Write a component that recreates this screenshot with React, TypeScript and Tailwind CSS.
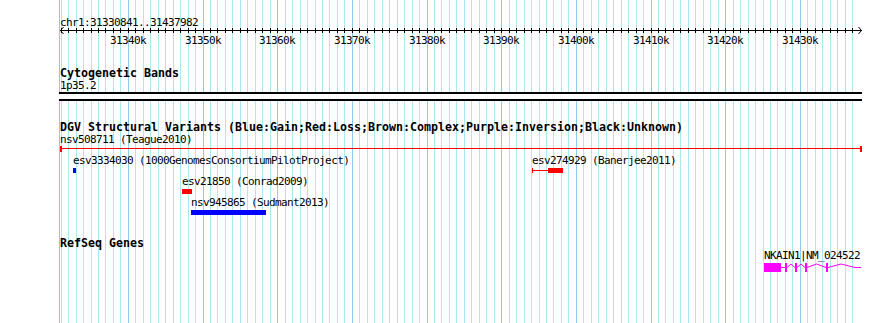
import type { ReactNode } from "react";

const START = 31330841;
const END = 31437982;
const SCALE = 800 / (END - START);

// pixel column of a genomic position
function col(pos: number): number {
  return Math.floor(60 + (pos - START) * SCALE);
}

const KB: number[] = [];
for (let k = 31331; k <= 31437; k++) KB.push(k);

const MONO = "font-['DejaVu_Sans_Mono','Liberation_Mono',monospace]";
const TEXT = `${MONO} whitespace-nowrap text-[11px] leading-[13px] tracking-[-0.62px] text-black`;
const TITLE = `${MONO} whitespace-nowrap text-[11.63px] leading-[12px] font-bold text-black`;

type DgvFeature = {
  id: string;
  study: string;
  row: number;
  labelX: number;
  kind: "span" | "box" | "capped";
  color: string;
  x1: number;
  x2: number;
  boxFrom?: number;
};

const DGV: DgvFeature[] = [
  { id: "nsv508711", study: "Teague2010", row: 0, labelX: 60, kind: "span", color: "#ff0000", x1: 60, x2: 862 },
  { id: "esv3334030", study: "1000GenomesConsortiumPilotProject", row: 1, labelX: 73, kind: "box", color: "#0000ff", x1: 73, x2: 76 },
  { id: "esv274929", study: "Banerjee2011", row: 1, labelX: 532, kind: "capped", color: "#ff0000", x1: 532, x2: 563, boxFrom: 548 },
  { id: "esv21850", study: "Conrad2009", row: 2, labelX: 182, kind: "box", color: "#ff0000", x1: 182, x2: 192 },
  { id: "nsv945865", study: "Sudmant2013", row: 3, labelX: 191, kind: "box", color: "#0000ff", x1: 191, x2: 266 },
];

const ROW_H = 21;

function Grid() {
  return (
    <svg className="absolute inset-0" width={890} height={323} shapeRendering="crispEdges">
      <line x1={59.5} x2={59.5} y1={0} y2={323} stroke="#8ccbe9" />
      {KB.map((k) => {
        const x = col(k * 1000) + 0.5;
        const major = k % 10 === 0;
        return (
          <line key={k} x1={x} x2={x} y1={0} y2={323} stroke={major ? "#8ccbe9" : "#ade8ee"} />
        );
      })}
    </svg>
  );
}

function Ruler() {
  return (
    <div className="relative h-[18px] w-[802px]">
      <svg
        className="absolute left-0 top-0 overflow-visible"
        width={802}
        height={18}
        viewBox="60 29 802 18"
        shapeRendering="crispEdges"
      >
        <line x1={60} x2={862} y1={30.5} y2={30.5} stroke="#000" />
        <polyline points="63.5,27 60.5,30.5 63.5,34" fill="none" stroke="#000" shapeRendering="auto" />
        <polyline points="858.5,27 861.5,30.5 858.5,34" fill="none" stroke="#000" shapeRendering="auto" />
        {KB.map((k) => {
          const x = col(k * 1000) + 0.5;
          return <line key={k} x1={x} x2={x} y1={28} y2={33} stroke="#000" />;
        })}
      </svg>
      {KB.filter((k) => k % 10 === 0).map((k) => (
        <span
          key={k}
          className={`absolute top-[5px] ${TEXT}`}
          style={{ left: col(k * 1000) - 60 - 18 }}
        >
          {k}k
        </span>
      ))}
    </div>
  );
}

function DgvGlyph({ f }: { f: DgvFeature }): ReactNode {
  const top = 133 + f.row * ROW_H;
  if (f.kind === "span") {
    return (
      <g fill={f.color}>
        <rect x={f.x1} y={top + 15} width={f.x2 - f.x1} height={1} />
        <rect x={f.x1} y={top + 13} width={2} height={6} />
        <rect x={f.x2 - 2} y={top + 13} width={2} height={6} />
      </g>
    );
  }
  if (f.kind === "capped") {
    const from = f.boxFrom ?? f.x1;
    return (
      <g fill={f.color}>
        <rect x={f.x1} y={top + 14} width={1} height={5} />
        <rect x={f.x1} y={top + 16} width={from - f.x1} height={1} />
        <rect x={from} y={top + 14} width={f.x2 - from} height={5} />
      </g>
    );
  }
  return <rect x={f.x1} y={top + 14} width={f.x2 - f.x1} height={5} fill={f.color} />;
}

function DgvTrack() {
  return (
    <div className="relative h-[84px] w-[802px]">
      <svg
        className="absolute left-0 top-0"
        width={802}
        height={84}
        viewBox="60 133 802 84"
        shapeRendering="crispEdges"
      >
        {DGV.map((f) => (
          <DgvGlyph key={f.id} f={f} />
        ))}
      </svg>
      {DGV.map((f) => (
        <span
          key={f.id}
          className={`absolute ${TEXT}`}
          style={{ left: f.labelX - 60, top: f.row * ROW_H }}
        >
          {f.id} ({f.study})
        </span>
      ))}
    </div>
  );
}

function RefSeqTrack() {
  const exons = [785, 795, 805, 826];
  return (
    <div className="relative h-[25px] w-[802px]">
      <svg
        className="absolute left-0 top-0"
        width={802}
        height={25}
        viewBox="60 249 802 25"
      >
        <polyline
          points="781,267.5 785,267.5 787,267.5 791,264 795,267.5 797,267.5 801,264 805,267.5 807,267.5 816.5,264 826,267.5 828,267.5 841,264 855,267.5 861,267.5"
          fill="none"
          stroke="#ff00ff"
          strokeWidth={1}
        />
        <g fill="#ff00ff" shapeRendering="crispEdges">
          <rect x={764} y={263} width={17} height={9} />
          {exons.map((x) => (
            <rect key={x} x={x} y={263} width={2} height={9} />
          ))}
        </g>
      </svg>
      <span className={`absolute top-0 left-[704px] ${TEXT}`}>NKAIN1|NM_024522</span>
    </div>
  );
}

export default function App() {
  return (
    <div className="relative h-[323px] w-[890px] overflow-hidden bg-white">
      <Grid />
      <div className="relative flex flex-col items-start pl-[60px] pt-[16px]">
        <div className={`h-[13px] ${TEXT}`}>chr1:31330841..31437982</div>
        <Ruler />

        <div className={`mt-[20px] h-[12px] ${TITLE}`}>Cytogenetic Bands</div>
        <div className={`h-[13px] ${TEXT}`}>1p35.2</div>
        <div className="-ml-px h-[9px] w-[803px] border-y-2 border-black bg-white" />

        <div className={`mt-[20px] h-[12px] ${TITLE}`}>
          DGV Structural Variants (Blue:Gain;Red:Loss;Brown:Complex;Purple:Inversion;Black:Unknown)
        </div>
        <DgvTrack />

        <div className={`mt-[20px] h-[12px] ${TITLE}`}>RefSeq Genes</div>
        <RefSeqTrack />
      </div>
    </div>
  );
}
